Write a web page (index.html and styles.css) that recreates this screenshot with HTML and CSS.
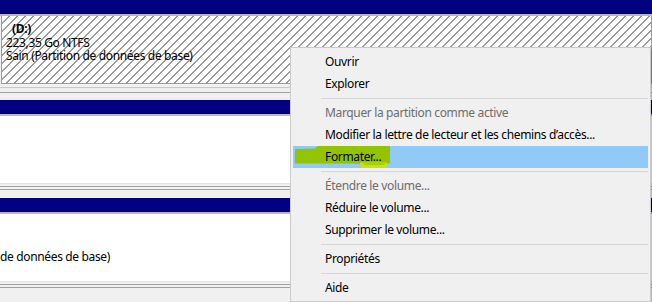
FILE: index.html
```html
<!DOCTYPE html>
<html lang="fr">
<head>
<meta charset="UTF-8" />
<meta name="viewport" content="width=device-width, initial-scale=1" />
<title>Gestion des disques - Menu contextuel</title>
<link rel="stylesheet" href="styles.css">
</head>
<body>
  <div class="disks">
    <section class="vol first">
      <div class="vol-head"></div>
      <div class="vol-body hatched">
        <div class="vol-lines">
          <div class="vol-name">(D:)</div>
          <div>223,35 Go NTFS</div>
          <div>Sain (Partition de données de base)</div>
        </div>
      </div>
      <div class="vol-foot"></div>
    </section>

    <section class="vol">
      <div class="vol-head"></div>
      <div class="vol-body"></div>
      <div class="vol-foot"></div>
    </section>

    <section class="vol">
      <div class="vol-head"></div>
      <div class="vol-body">
        <!-- volume scrolled off to the left, only the end of its status shows -->
        <div class="vol-lines scrolled">
          <div>de données de base)</div>
        </div>
      </div>
      <div class="vol-foot"></div>
    </section>
  </div>

  <ul class="menu">
    <li>Ouvrir</li>
    <li>Explorer</li>
    <li class="sep"></li>
    <li class="disabled">Marquer la partition comme active</li>
    <li>Modifier la lettre de lecteur et les chemins d’accès...</li>
    <li class="hover">
      <!-- highlighter stroke drawn over the item -->
      <svg class="marker" width="100" height="24" viewBox="0 0 100 24">
        <path d="M2 3 L22 2.5 L25 0 L97 0 L97 17 L93 18 L68 18 L60 17.5 L2 17.5 Z" fill="#92c500"/>
        <path d="M67 16.5 L94 16.5 L93 22 L68 22 Z" fill="#cde400"/>
        <path d="M70 17 L92 17 L91 19 L71 19 Z" fill="#a6cf00"/>
      </svg>
      <span>Formater...</span>
    </li>
    <li class="sep"></li>
    <li class="disabled">Étendre le volume...</li>
    <li>Réduire le volume...</li>
    <li>Supprimer le volume...</li>
    <li class="sep"></li>
    <li>Propriétés</li>
    <li class="sep"></li>
    <li>Aide</li>
  </ul>
</body>
</html>
```

FILE: styles.css
```css
/* Base reset */
* {
  box-sizing: border-box;
}
body {
  margin: 0;
  width: 652px;
  height: 302px;
  overflow: hidden;
  background: #f0f0f0;
  font-family: 'Noto Sans', 'Open Sans', sans-serif;
  font-size: 12px;
  letter-spacing: -0.35px;
  color: #000;
}

/* Disk volumes */
.disks {
  display: flex;
  flex-direction: column;
}
.vol-head {
  height: 16px;
  background: #000080;
  border-bottom: 2px solid #b9b9b9;
}
.vol-body {
  height: 68px;
  background: #fff;
  border-bottom: 1px solid #e3e3e3;
}
.vol-body.hatched {
  margin-left: 1px;
  border: 1px solid #9a9a9a;
  border-top: none;
  background: repeating-linear-gradient(135deg, #fff 0 4.6px, #9c9c9c 4.6px 5.66px);
}
.vol-foot {
  height: 14px;
  background:
    linear-gradient(#a0a0a0, #a0a0a0) 0 2px / 100% 1px no-repeat,
    linear-gradient(#a0a0a0, #a0a0a0) 0 5px / 100% 1px no-repeat,
    #f0f0f0;
}
.vol.first .vol-foot {
  height: 16px;
  background:
    linear-gradient(#c8c8c8, #c8c8c8) 0 3px / 100% 1px no-repeat,
    linear-gradient(#a0a0a0, #a0a0a0) 0 8px / 100% 1px no-repeat,
    #f0f0f0;
}
.vol-lines {
  padding: 6px 0 0 4px;
  line-height: 13px;
  white-space: nowrap;
}
.vol-lines.scrolled {
  padding: 36px 0 0 0;
}
.vol-name {
  font-weight: 700;
  padding-left: 6px;
  margin-bottom: 1px;
}

/* Context menu */
.menu {
  position: absolute;
  left: 290px;
  top: 47px;
  width: 361px;
  margin: 0;
  padding: 3px 2px 2px;
  list-style: none;
  background: #f0f0f0;
  border: 1px solid #cbcbcb;
  box-shadow: 2px 2px 2px rgba(0,0,0,0.25);
}
.menu li {
  position: relative;
  height: 22px;
  line-height: 22px;
  padding-left: 32px;
  white-space: nowrap;
}
.menu li.disabled {
  color: #6d6d6d;
}
.menu li.hover {
  background: #91c9f7;
}
.menu li.sep {
  height: 7px;
  padding: 0;
  margin-left: 28px;
  background: linear-gradient(#d7d7d7, #d7d7d7) 0 3px / 100% 1px no-repeat;
}
.menu li span {
  position: relative;
}
.marker {
  position: absolute;
  left: 0;
  top: 0;
}
```
